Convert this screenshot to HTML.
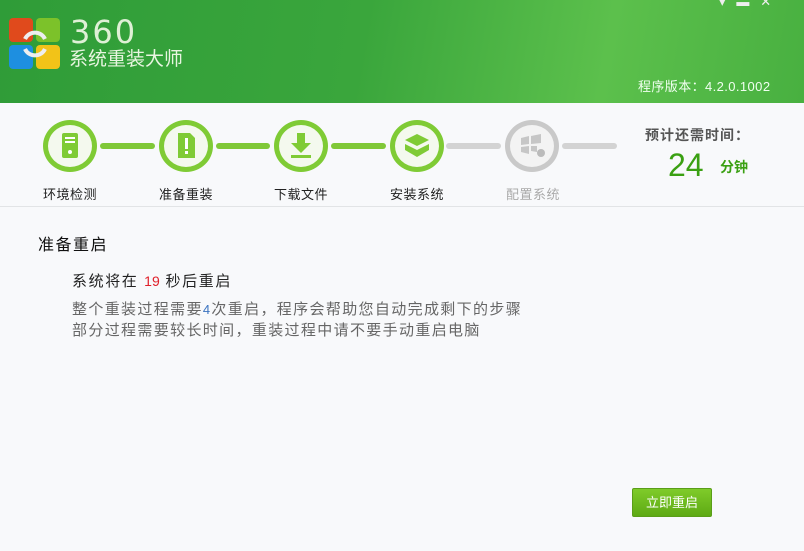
<!DOCTYPE html>
<html><head><meta charset="utf-8"><style>
*{margin:0;padding:0;box-sizing:border-box}
body{width:804px;height:551px;overflow:hidden;background:#f8f9fb;font-family:"Liberation Sans","Noto Sans CJK SC",sans-serif;position:relative}
.hdr{position:absolute;left:0;top:0;width:804px;height:103px;background:linear-gradient(100deg,#2f9c38 0%,#3aa63c 45%,#5cc04c 75%,#48b040 100%)}
.a{position:absolute}
.circ{position:absolute;top:120px;width:54px;height:52px;border-radius:50%;border:5px solid #7fcb35;background:#f4f9ee}
.circ.g{border-color:#c9c9c9;background:#f3f3f3}
.ln{position:absolute;top:143px;height:6px;border-radius:3px;background:#80c838}
.ln.g{background:#d3d3d3}
.lbl{position:absolute;top:184px;font-size:13px;color:#222;letter-spacing:0.5px}
</style></head><body>
<div class="hdr"></div>
<svg class="a" style="left:8px;top:17px" width="54" height="54" viewBox="0 0 54 54">
<rect x="1" y="1" width="24" height="24" rx="4" fill="#e04a1c"/>
<rect x="28" y="1" width="24" height="24" rx="4" fill="#7cc22a"/>
<rect x="1" y="28" width="24" height="24" rx="4" fill="#1e8fe0"/>
<rect x="28" y="28" width="24" height="24" rx="4" fill="#f2c318"/>
<path d="M17 22a11 11 0 0 1 20 0" stroke="#eee" stroke-width="4" fill="none"/>
<path d="M37 32a11 11 0 0 1-20 0" stroke="#eee" stroke-width="4" fill="none"/>
</svg>
<div class="a" style="left:70px;top:14px;font-size:32px;color:#dff0d6;letter-spacing:2px;font-family:'DejaVu Sans',sans-serif;line-height:36px">360</div>
<div class="a" style="left:69px;top:48px;font-size:19px;color:#e8f5e0;line-height:24px">系统重装大师</div>
<div class="a" style="left:719px;top:-6px;font-size:13px;color:#eee">▾&nbsp;&nbsp;&nbsp;▬&nbsp;&nbsp;&nbsp;✕</div>
<div class="a" style="left:638px;top:76px;font-size:13px;color:#f0fff0;letter-spacing:0.4px">程序版本：4.2.0.1002</div>
<div class="a" style="left:0;top:206px;width:804px;height:1px;background:#e2e4e6"></div>
<div class="circ" style="left:43px"></div>
<div class="circ" style="left:159px"></div>
<div class="circ" style="left:274px"></div>
<div class="circ" style="left:390px"></div>
<div class="circ g" style="left:505px"></div>
<div class="ln" style="left:100px;width:55px"></div>
<div class="ln" style="left:216px;width:54px"></div>
<div class="ln" style="left:331px;width:55px"></div>
<div class="ln g" style="left:446px;width:55px"></div>
<div class="ln g" style="left:562px;width:55px"></div>
<svg class="a" style="left:43px;top:120px" width="54" height="52" viewBox="0 0 54 52"><rect x="19" y="13" width="16" height="25" rx="2" fill="#7fcb35"/><rect x="22" y="17" width="10" height="2" fill="#fff"/><rect x="22" y="21" width="10" height="2" fill="#fff"/><circle cx="27" cy="32" r="2" fill="#fff"/></svg>
<svg class="a" style="left:159px;top:120px" width="54" height="52" viewBox="0 0 54 52"><path d="M19 13h12l5 5v20h-17z" fill="#7fcb35"/><rect x="26" y="18" width="3" height="11" fill="#fff"/><rect x="26" y="31" width="3" height="3" fill="#fff"/></svg>
<svg class="a" style="left:274px;top:120px" width="54" height="52" viewBox="0 0 54 52"><path d="M23 13h8v10h6l-10 10-10-10h6z" fill="#7fcb35"/><rect x="17" y="35" width="20" height="3" fill="#7fcb35"/></svg>
<svg class="a" style="left:390px;top:120px" width="54" height="52" viewBox="0 0 54 52"><path d="M15 20l12-6 12 6-12 6zM15 24l12 6 12-6v6l-12 7-12-7z" fill="#7fcb35"/></svg>
<svg class="a" style="left:505px;top:120px" width="54" height="52" viewBox="0 0 54 52"><path d="M16 18l8-2v8l-8 1zM26 16l10-2v9l-10 1zM16 27l8-1v8l-8-2zM26 26h6v6l-6-1z" fill="#c6c6c6"/><circle cx="36" cy="33" r="4" fill="#bbb"/></svg>
<div class="lbl" style="left:43px">环境检测</div>
<div class="lbl" style="left:159px">准备重装</div>
<div class="lbl" style="left:274px">下载文件</div>
<div class="lbl" style="left:390px">安装系统</div>
<div class="lbl" style="left:506px;color:#aaa">配置系统</div>
<div class="a" style="left:645px;top:125px;font-size:14px;color:#555;font-weight:bold;letter-spacing:1px">预计还需时间：</div>
<div class="a" style="left:668px;top:147px;font-size:32px;color:#3aa012;line-height:36px">24</div>
<div class="a" style="left:720px;top:157px;font-size:14px;color:#3aa012;font-weight:bold">分钟</div>
<div class="a" style="left:38px;top:231px;font-size:16px;color:#111;letter-spacing:1.5px">准备重启</div>
<div class="a" style="left:72px;top:270px;font-size:15px;color:#222;letter-spacing:1.6px">系统将在 <span style="color:#e0202a;font-size:14px;letter-spacing:0">19</span> 秒后重启</div>
<div class="a" style="left:72px;top:299px;font-size:15px;color:#666;line-height:21px;letter-spacing:1.35px">整个重装过程需要<span style="color:#3b73c0;font-size:13px">4</span>次重启，程序会帮助您自动完成剩下的步骤<br>部分过程需要较长时间，重装过程中请不要手动重启电脑</div>
<div class="a" style="left:632px;top:488px;width:80px;height:29px;border-radius:2px;background:linear-gradient(#7fcb2a,#5eaa14);border:1px solid #5a9e18;color:#fff;font-size:13px;text-align:center;line-height:27px">立即重启</div>
</body></html>
